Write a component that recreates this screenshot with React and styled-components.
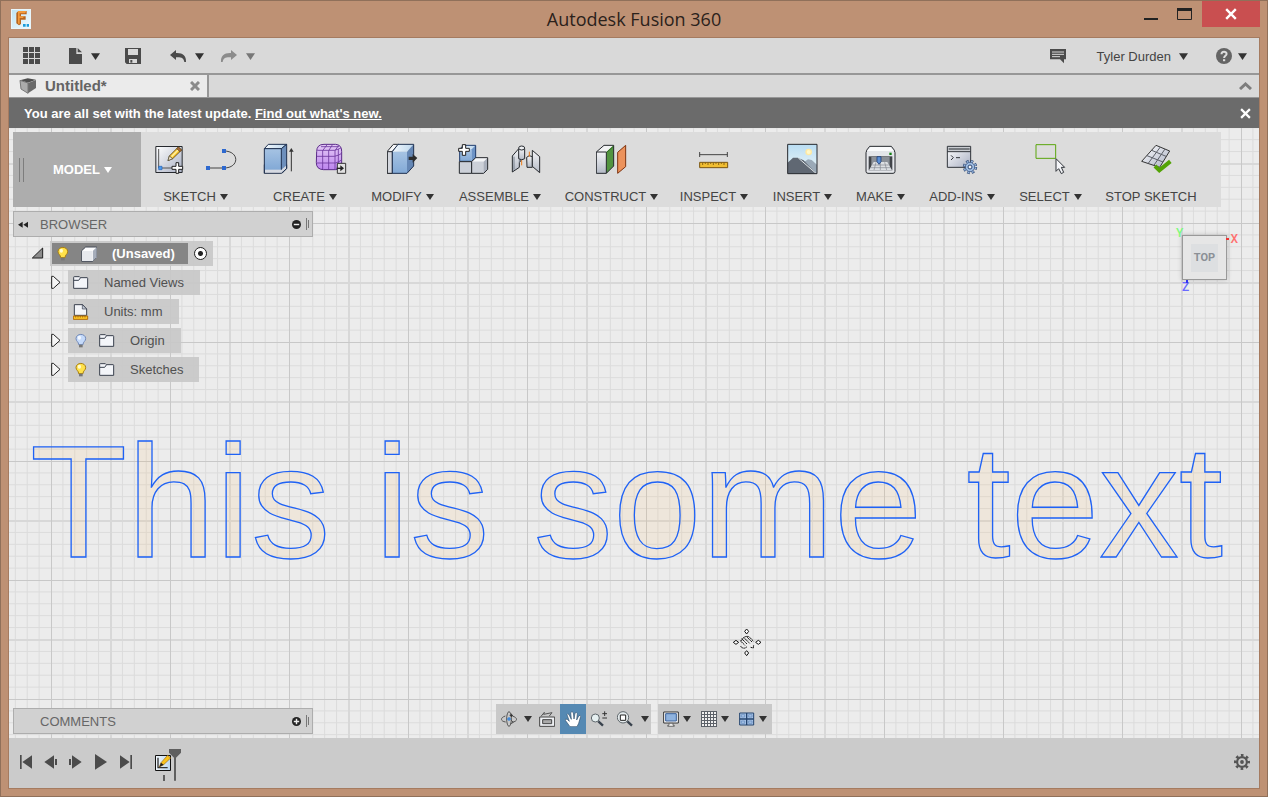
import React from "react";
import styled, { createGlobalStyle } from "styled-components";

const GlobalStyle = createGlobalStyle`
  * { box-sizing: border-box; }
  body { margin: 0; font-family: "Liberation Sans", Arial, sans-serif; font-size: 13px; color: #444; }
  button { font: inherit; color: inherit; background: none; border: 0; padding: 0; margin: 0; }
`;

/* ---------- window frame ---------- */

const Window = styled.div`
  display: flex;
  flex-direction: column;
  height: 100vh;
  min-height: 600px;
  padding: 0 7px 7px;
  border: 1px solid #90705a;
  background: #be9174;
`;

const TitleBar = styled.header`
  display: grid;
  grid-template-columns: 1fr auto 1fr;
  height: 36px;
  flex: none;
`;

const Title = styled.h1`
  margin: 0;
  font: 400 18px/36px "Open Sans", "Noto Sans", sans-serif;
  color: #2b211b;
`;

const LogoSlot = styled.div`
  padding: 8px 0 0 3px;
`;

const WindowButtons = styled.div`
  display: flex;
  justify-content: flex-end;
  align-items: flex-start;
`;

const WindowButton = styled.button`
  display: flex;
  justify-content: center;
  width: ${(p) => (p.$close ? 58 : 34)}px;
  height: 26px;
  padding-top: 7px;
  background: ${(p) => (p.$close ? "#c94f50" : "transparent")};
`;

const Client = styled.div`
  display: flex;
  flex-direction: column;
  flex: 1;
  min-height: 0;
  border: 1px solid #a57b60;
`;

/* ---------- quick access bar, tabs, notice ---------- */

const QuickBar = styled.div`
  display: flex;
  align-items: center;
  flex: none;
  height: 37px;
  padding: 1px 12px 0 14px;
  border-bottom: 2px solid #979797;
  background: #d9d9d9;
`;

const IconButton = styled.button`
  display: flex;
  align-items: center;
  gap: ${(p) => p.$gap || 0}px;
  margin-right: ${(p) => p.$after || 0}px;
`;

const Spacer = styled.div`
  flex: 1;
`;

const TabStrip = styled.div`
  display: flex;
  justify-content: space-between;
  flex: none;
  height: 23px;
  padding-right: 7px;
  border-bottom: 1px solid #979797;
  background: #d9d9d9;
`;

const Tab = styled.div`
  display: flex;
  align-items: center;
  gap: 8px;
  width: 200px;
  padding: 0 7px 0 10px;
  border-right: 2px solid #979797;
  background: #ebebeb;
  color: #646464;
  font-size: 15px;
  font-weight: bold;
  line-height: 22px;
`;

const Notice = styled.div`
  display: flex;
  align-items: center;
  justify-content: space-between;
  flex: none;
  height: 30px;
  padding: 0 8px 0 15px;
  background: #6b6b6b;
  color: #fff;
  font-weight: bold;
  a { color: inherit; }
`;

/* ---------- work area ---------- */

const Workspace = styled.main`
  position: relative;
  display: flex;
  flex-direction: column;
  flex: 1;
  min-height: 0;
  gap: 4px;
  padding: 4px;
  background: #ececec;
`;

const Layer = styled.svg`
  position: absolute;
  inset: 0;
  width: 100%;
  height: 100%;
`;

const Ribbon = styled.div`
  position: relative;
  display: flex;
  align-self: flex-start;
  height: 75px;
  background: #dcdcdc;
`;

const ModelButton = styled.button`
  display: flex;
  align-items: center;
  width: 128px;
  padding-left: 6px;
  background: #adadad;
  color: #fff;
  font-weight: bold;
  span { margin: 0 4px 0 29px; }
`;

const Group = styled.div`
  display: flex;
  flex-direction: column;
  align-items: center;
  position: relative;
  width: ${(p) => p.$width}px;
  padding-top: 11px;
  & + &::before {
    content: "";
    position: absolute;
    left: -1px;
    top: 4px;
    bottom: 4px;
    width: 2px;
    background: #c9c9c9;
  }
`;

const GroupIcons = styled.div`
  display: flex;
  gap: 20px;
  height: 32px;
`;

const GroupLabel = styled.button`
  display: flex;
  align-items: center;
  gap: 4px;
  margin-top: 14px;
  line-height: 16px;
  white-space: nowrap;
`;

const PanelBar = styled.div`
  position: relative;
  display: flex;
  align-items: center;
  width: 300px;
  height: 26px;
  padding: 0 2px 0 4px;
  border: 1px solid #adadad;
  background: #d1d1d1;
  color: #666;
`;

const PanelToggle = styled.span`
  display: flex;
  width: 22px;
`;

const Tree = styled.ul`
  position: relative;
  display: flex;
  flex-direction: column;
  gap: 4px;
  margin: 0;
  padding: 0 0 0 18px;
  list-style: none;
`;

const TreeItem = styled.li`
  display: flex;
  align-items: center;
  height: 25px;
  padding-left: ${(p) => (p.$child ? 20 : 0)}px;
`;

const Expander = styled.button`
  display: flex;
  width: ${(p) => (p.$child ? 17 : 19)}px;
  height: 15px;
`;

const Pill = styled.div`
  display: flex;
  align-items: center;
  height: 25px;
  padding: 0 16px 0 5px;
  background: rgba(200, 200, 200, 0.92);
  color: #505050;
  svg + svg { margin-left: 10px; }
  span { margin-left: 15px; }
`;

const RootPill = styled(Pill)`
  padding: 0 6px 0 2px;
`;

const RootName = styled.div`
  display: flex;
  align-items: center;
  width: 136px;
  height: 21px;
  margin-right: 6px;
  padding-left: 3px;
  background: #858585;
  color: #fff;
  font-weight: bold;
`;

const ActiveRadio = styled.input`
  appearance: none;
  width: 13px;
  height: 13px;
  margin: 0;
  border: 1px solid #222;
  border-radius: 50%;
  background: radial-gradient(circle, #222 2px, #fff 3px);
`;

const ViewCube = styled.div`
  position: absolute;
  top: 107px;
  right: 32px;
  display: grid;
  place-items: center;
  width: 45px;
  height: 45px;
  border: 1px solid #999;
  background: #e6e6e6;
  box-shadow: 0 0 5px rgba(0, 0, 0, 0.2);
`;

const CubeFace = styled.button`
  width: 27px;
  height: 28px;
  background: #dddfe1;
  color: #8b9096;
  font: 700 11px Roboto, sans-serif;
`;

const Axis = styled.span`
  position: absolute;
  color: ${(p) => p.$color};
  font: 500 12px/12px Roboto, sans-serif;
`;

const AxisX = styled(Axis)`
  top: -3px;
  right: -12px;
  &::before {
    content: "";
    position: absolute;
    left: -4px;
    top: 5px;
    width: 3px;
    height: 2px;
    background: #e33;
  }
`;

const AxisY = styled(Axis)`
  top: -9px;
  left: -7px;
`;

const AxisZ = styled(Axis)`
  bottom: -14px;
  left: -1px;
  &::before {
    content: "";
    position: absolute;
    left: 4px;
    top: -1px;
    width: 2px;
    height: 3px;
    background: #33e;
  }
`;

const Footer = styled.div`
  position: relative;
  display: grid;
  grid-template-columns: 1fr auto 1fr;
  align-items: end;
  margin-top: auto;
`;

const NavBars = styled.div`
  display: flex;
  gap: 7px;
`;

const NavBar = styled.div`
  display: flex;
  height: 30px;
  background: #c9c9c9;
`;

const NavButton = styled.button`
  display: flex;
  align-items: center;
  justify-content: center;
  width: 26px;
  background: ${(p) => (p.$active ? "#5589b3" : "transparent")};
`;

const NavArrow = styled.button`
  display: flex;
  align-items: center;
  justify-content: center;
  width: ${(p) => (p.$end ? 13 : 12)}px;
`;

const SplitButton = styled.button`
  display: flex;
  align-items: center;
  gap: 4px;
  width: 38px;
  padding-left: 5px;
`;

const Timeline = styled.footer`
  display: flex;
  align-items: center;
  flex: none;
  height: 50px;
  padding: 0 9px 2px 10px;
  background: #cbcbcb;
`;

const Playback = styled.div`
  display: flex;
  gap: 11px;
  margin-right: 21px;
`;

const FeatureButton = styled.button`
  display: flex;
  padding-top: 6px;
`;

/* ---------- icons ---------- */

const Icon = ({ box, w = 32, h = 32, children }) => (
  <IconSvg viewBox={box} width={w} height={h} fill="none" aria-hidden="true">
    {children}
  </IconSvg>
);

const IconSvg = styled.svg`
  flex: none;
`;

const Arrow = ({ color = "#333", w = 8, h = 6 }) => (
  <Icon box="0 0 8 6" w={w} h={h}>
    <path d="M0 0H8L4 6Z" fill={color} />
  </Icon>
);

const Grip = () => (
  <Icon box="0 0 5 24" w={5} h={24}>
    <path d="M.5 0V24M4.500 0V24" stroke="#7d7d7d" />
  </Icon>
);

const SmallGrip = () => (
  <Icon box="0 0 4 12" w={4} h={12}>
    <path d="M.5 0V12M2.500 2V10" stroke="#777" />
  </Icon>
);

const Cross = ({ color, size = 10, width = 2 }) => (
  <Icon box="0 0 10 10" w={size} h={size}>
    <path d="M1 1 9 9M9 1 1 9" stroke={color} strokeWidth={width} />
  </Icon>
);

const Logo = () => (
  <Icon box="33 27 60 60" w={20} h={20}>
    <defs>
      <linearGradient id="sky" x1="0" y1="0" x2="1" y2="1">
        <stop stopColor="#bfe4f2" /><stop offset="1" stopColor="#f2fafd" />
      </linearGradient>
    </defs>
    <path d="M33 27H93V87H33Z" fill="#e8f6fb" />
    <path d="M36 30H90V84H36Z" fill="url(#sky)" />
    <path d="M49 39 55 33H80V43H63V49H77V59H63V72L57 76 49 70Z" fill="#b8651c" />
    <path d="M54 33H80L75 40H59V49H72L69 54H59V71H54Z" fill="#f39a3b" />
    <path d="M69 72H77V80H69ZM80 72H87V80H80Z" fill="#1b9ddb" />
  </Icon>
);

const AppsIcon = () => (
  <Icon box="69 144 54 54" w={18} h={18}>
    {[69, 87, 105].map((x) => [144, 162, 180].map((y) => (
      <rect key={x + "-" + y} x={x} y={y} width="15" height="15" fill="#4b4b4b" />
    )))}
  </Icon>
);

const FileIcon = () => (
  <Icon box="204 144 48 48" w={16} h={16}>
    <path d="M207 144H229V162H246V192H207ZM233 144 246 157H233Z" fill="#4b4b4b" />
  </Icon>
);

const SaveIcon = () => (
  <Icon box="375 144 48 48" w={16} h={16}>
    <path fillRule="evenodd" d="M375 144H423V192H380L375 187ZM384 147V165H414V147ZM387 177V189H411V177Z" fill="#4b4b4b" />
    <path d="M391 180H397V188H391Z" fill="#4b4b4b" />
  </Icon>
);

const UndoIcon = ({ color = "#4b4b4b", flip }) => (
  <Icon box="507 144 54 48" w={18} h={16}>
    <path transform={flip ? "translate(1068 0) scale(-1 1)" : undefined}
      d="M510 165 528 150V159C548 158 559 166 558 186H553C551 175 545 171 528 172V180Z" fill={color} />
  </Icon>
);

const CommentIcon = () => (
  <Icon box="90 147 48 45" w={16} h={15}>
    <path d="M90 147H138V178H132V190L120 178H90Z" fill="#4b4b4b" />
    <path d="M96 156H132M96 163H132M96 170H120" stroke="#d9d9d9" strokeWidth="3" />
  </Icon>
);

const HelpIcon = () => (
  <Icon box="0 0 16 16" w={16} h={16}>
    <circle cx="8" cy="8" r="8" fill="#646464" />
    <path d="M5.500 6.300C5.500 3 10.700 3.200 10.600 6C10.500 7.800 8.100 8 8.100 10" stroke="#ddd" strokeWidth="2" />
    <path d="M7 11.200H9.200V13.200H7Z" fill="#ddd" />
  </Icon>
);

const TabCube = () => (
  <Icon box="54 231 54 51" w={18} h={17}>
    <path d="M57 238 80 232 105 236 81 245Z" fill="#4e4e4e" />
    <path d="M57 238 81 246V277L60 264Z" fill="#ababab" />
    <path d="M81 246 105 237V261L81 277Z" fill="#6a6a6a" />
    <path d="M57 238 81 246V277L60 264Z" stroke="#777" strokeWidth="3" />
  </Icon>
);

const DefsHolder = styled.svg`
  position: absolute;
`;

const Gradients = () => (
  <DefsHolder width="0" height="0" aria-hidden="true">
    <defs>
      <linearGradient id="steel" x1="0" y1="0" x2="1" y2="1">
        <stop stopColor="#fff" /><stop offset="1" stopColor="#a9b0c3" />
      </linearGradient>
      <linearGradient id="pale" x1="0" y1="0" x2="0" y2="1">
        <stop stopColor="#f4f5f7" /><stop offset="1" stopColor="#b4bac6" />
      </linearGradient>
      <linearGradient id="blue" x1="0" y1="0" x2="0" y2="1">
        <stop stopColor="#a6c3e3" /><stop offset="1" stopColor="#82a9d6" />
      </linearGradient>
      <linearGradient id="blueTop" x1="0" y1="0" x2="1" y2="0">
        <stop stopColor="#f3f8fc" /><stop offset="1" stopColor="#bcd7ee" />
      </linearGradient>
      <linearGradient id="violet" x1="0" y1="0" x2="0" y2="1">
        <stop stopColor="#e4caf6" /><stop offset="1" stopColor="#bd85ee" />
      </linearGradient>
      <linearGradient id="skyline" x1="0" y1="0" x2="0" y2="1">
        <stop stopColor="#b9ddf3" /><stop offset="1" stopColor="#f0f8f8" />
      </linearGradient>
    </defs>
  </DefsHolder>
);

const SketchIcon = () => (
  <Icon box="41 39 96 96">
    <path d="M46.500 49.500H125.500V127.500H46.500Z" fill="url(#steel)" stroke="#26292e" strokeWidth="3" />
    <path d="M55 57V114H102" stroke="#555" strokeWidth="3" />
    <path d="M55 109H65V119H55Z" fill="#4c9bf0" stroke="#1f5fb5" strokeWidth="2" />
    <path d="M83 92 87 78 114 51 124 60 97 86Z" fill="#f7c52e" stroke="#55401a" strokeWidth="2.500" />
    <path d="M92 78 114 56 117 59 95 82Z" fill="#fff0a0" />
    <path d="M114 51 124 60 119 65 109 56Z" fill="#a9693c" stroke="#55401a" strokeWidth="2" />
    <path d="M83 92 87 78 97 86Z" fill="#f6e6cf" stroke="#443" strokeWidth="2" />
    <path d="M107 98H115V109H127V118H115V130H107V118H95V109H107Z" fill="#fff" stroke="#222" strokeWidth="3" />
  </Icon>
);

const ArcIcon = () => (
  <Icon box="198 39 96 96">
    <path d="M204 114H252C299 114 299 63 252 63" stroke="#454545" strokeWidth="3" />
    <path d="M198 108H210V120H198ZM246 108H258V120H246ZM246 57H258V69H246Z" fill="#2e69cf" />
  </Icon>
);

const ExtrudeIcon = () => (
  <Icon box="369 39 96 96">
    <path d="M373 116V130H424L440 116V104H373Z" fill="#d6dae2" stroke="#26344e" strokeWidth="3" />
    <path d="M373 56 385 43H440L424 56Z" fill="url(#blueTop)" stroke="#1f3150" strokeWidth="3" />
    <path d="M373 56H424V119H373Z" fill="url(#blue)" />
    <path d="M424 56 440 43V106L424 119Z" fill="#6d8fbc" />
    <path d="M373 130V56H424L440 43V115L426 130M424 56V119" stroke="#1f3150" strokeWidth="3" />
    <path d="M454 124V60" stroke="#333" strokeWidth="3" />
    <path d="M447 65 454 54 461 65Z" fill="#333" />
  </Icon>
);

const FormIcon = () => (
  <Icon box="525 39 96 96">
    <path d="M530 65Q530 43 552 43H587Q606 45 605 65V100Q604 118 586 119H550Q529 118 529 98Z" fill="url(#violet)" stroke="#5a2b87" strokeWidth="3" />
    <path d="M530 79H583Q598 76 605 70M530 99H586Q598 96 604 90M532 61H584Q596 57 603 54M543 50H597M548 118V62L562 43M566 119V62L578 43M585 119V62L596 46M595 112V57" stroke="#6c379d" strokeWidth="2.500" />
    <path d="M592 100H617V130H592Z" fill="#e1e1e1" stroke="#333" strokeWidth="3" />
    <path d="M590 115H607" stroke="#222" strokeWidth="4" />
    <path d="M601 106 612 115 601 124Z" fill="#222" />
  </Icon>
);

const ModifyIcon = () => (
  <Icon box="741 39 96 96">
    <path d="M742 64 760 43H776L757 64V130H742Z" fill="#f6f7f9" stroke="#26292e" strokeWidth="3" />
    <path d="M742 65H757V130H742Z" fill="#d4d7de" stroke="#26292e" strokeWidth="3" />
    <path d="M757 65 774 43H821L801 65Z" fill="url(#blueTop)" />
    <path d="M757 65H801V130H757Z" fill="url(#blue)" />
    <path d="M801 65 821 43V108L801 130Z" fill="#6587b5" />
    <path d="M757 65 774 43H821V108L801 130H757Z" stroke="#1f3150" strokeWidth="3" />
    <path d="M806 80H818V72L832 84 818 98V90H806Z" fill="#2c2c2c" />
  </Icon>
);

const AssembleIcon = () => (
  <Icon box="54 39 96 96">
    <path d="M59 94V58L70 46H107V84L95 94Z" fill="url(#blueTop)" />
    <path d="M59 58H95V94H59Z" fill="url(#blue)" />
    <path d="M95 58 107 46V84L95 94Z" fill="#6d93c5" />
    <path d="M59 94V58L70 46H107V84L95 94Z" stroke="#1f3b6b" strokeWidth="3" />
    <path d="M58 95H95V130H58Z" fill="#ccd0d8" stroke="#26292e" strokeWidth="3" />
    <path d="M95 95 107 83H143L131 95Z" fill="#f4f5f7" />
    <path d="M95 95H131V130H95Z" fill="#ccd0d8" />
    <path d="M131 95 143 83V118L131 130Z" fill="#aab0bc" />
    <path d="M95 95 107 83H143V118L131 130H95Z" stroke="#26292e" strokeWidth="3" />
    <path d="M67 44H77V55H88V64H77V76H67V64H56V55H67Z" fill="#fff" stroke="#222" strokeWidth="3" />
  </Icon>
);

const JointIcon = () => (
  <Icon box="210 39 96 96">
    <path d="M217 78 237 55 251 57V80L238 98V112L217 126Z" fill="url(#pale)" stroke="#26292e" strokeWidth="3" />
    <path d="M238 56V98M222 80V119" stroke="#66707c" strokeWidth="2.500" />
    <path d="M236 56V86Q245 93 254 86V56" fill="url(#pale)" stroke="#26292e" strokeWidth="3" />
    <ellipse cx="245" cy="54" rx="9" ry="6" fill="#eef0f3" stroke="#26292e" strokeWidth="3" />
    <path d="M260 82Q267 73 277 80V112H261Z" fill="url(#pale)" stroke="#26292e" strokeWidth="3" />
    <path d="M277 61 299 80V128L277 109Z" fill="url(#pale)" stroke="#26292e" strokeWidth="3" />
    <path d="M245 91V106M268 65V80" stroke="#ef7d1b" strokeWidth="3" />
  </Icon>
);

const ConstructIcon = () => (
  <Icon box="468 39 96 96">
    <path d="M469 66 492 46H521L499 66Z" fill="#f2f3f4" />
    <path d="M469 66H499V130H469Z" fill="url(#pale)" />
    <path d="M499 66 521 46V108L499 130Z" fill="#529440" />
    <path d="M469 66 492 46H521V108L499 130H469ZM469 66H499V130" stroke="#26292e" strokeWidth="3" />
    <path d="M500 67 520 49" stroke="#2c6a20" strokeWidth="3" />
    <path d="M533 67 557 46V110L533 130Z" fill="#ec925b" stroke="#7e3310" strokeWidth="3" />
  </Icon>
);

const InspectIcon = () => (
  <Icon box="774 39 96 96">
    <path d="M779 66V81M862 66V81M779 74H862" stroke="#444" strokeWidth="3" />
    <path d="M779 97H863V113H779Z" fill="#f1be31" stroke="#7a5510" strokeWidth="3" />
    <path d="M788 98V105M796 98V102M804 98V105M812 98V102M820 98V105M828 98V102M836 98V105M844 98V102M852 98V105" stroke="#7a5510" strokeWidth="2.500" />
  </Icon>
);

const InsertIcon = () => (
  <Icon box="80 39 96 96">
    <path d="M82 43H170V131H82Z" fill="url(#skyline)" />
    <circle cx="145" cy="66" r="10" fill="#ffe9a3" />
    <circle cx="145" cy="66" r="6" fill="#fff8c9" />
    <path d="M118 105 143 88 154 90 170 104V131H118Z" fill="#9aa9b7" />
    <path d="M82 98 98 83H112L130 91 168 131H82Z" fill="#606873" />
    <path d="M114 84 168 131" stroke="#dde3e6" strokeWidth="3" />
    <path d="M82 43H170V131H82Z" stroke="#26292e" strokeWidth="3" />
  </Icon>
);

const MakeIcon = () => (
  <Icon box="314 39 96 96">
    <path d="M317 68Q317 61 328 49H393Q404 61 404 68V124Q404 130 398 130H323Q317 130 317 124Z" fill="#e4e6ea" stroke="#26292e" strokeWidth="3" />
    <path d="M320 63 331 51H390L401 63Z" fill="#fafbfc" />
    <path d="M387 68H394V75H387Z" fill="#138013" />
    <path d="M325 79H396V121H325Z" fill="#414449" />
    <path d="M333 81H388V115H333Z" fill="#8b9098" />
    <path d="M326 121 340 96H381L395 121Z" fill="#dcdfe3" />
    <path d="M336 105H385M331 113H390M347 97 341 120M360 97V120M373 97 379 120" stroke="#83878f" strokeWidth="2" />
    <path d="M350 80H362V95L356 103 350 95Z" fill="#5b8fd6" stroke="#1e3f78" strokeWidth="2.500" />
  </Icon>
);

const AddInsIcon = () => (
  <Icon box="558 39 96 96">
    <path d="M562 49H632V112H562Z" fill="url(#steel)" />
    <path d="M562 49H632V64H562Z" fill="#c9ccd1" />
    <path d="M566 54H629V60H566Z" fill="#777b80" />
    <path d="M562 49H632V112H562ZM562 65H632" stroke="#30343a" strokeWidth="3" />
    <path d="M573 76 580 83 573 90M588 83H600" stroke="#30343a" strokeWidth="3" />
    <circle cx="630" cy="111" r="17" stroke="#2c4672" strokeWidth="9" strokeDasharray="7.500 5.850" />
    <circle cx="630" cy="111" r="16" stroke="#96b5dc" strokeWidth="7" strokeDasharray="5 7.570" strokeDashoffset="-1" />
    <circle cx="630" cy="111" r="14" fill="#9fbde2" stroke="#2c4672" strokeWidth="2" />
    <circle cx="630" cy="111" r="6" fill="#f4f4f4" stroke="#2c4672" strokeWidth="3" />
  </Icon>
);

const SelectIcon = () => (
  <Icon box="104 39 96 96">
    <path d="M107 44H166V85H107Z" stroke="#5aa50d" strokeWidth="3" />
    <path d="M167 86V124L175 116 183 131 190 127 183 112H193Z" fill="#f4f5f8" stroke="#30343a" strokeWidth="3" />
  </Icon>
);

const StopSketchIcon = () => (
  <Icon box="423 39 96 96">
    <path d="M468 46 509 63 479 112 425 94Z" fill="url(#steel)" stroke="#333" strokeWidth="3" />
    <path d="M481 51 444 101M495 57 461 107M455 61 498 79M441 77 489 96" stroke="#5c6068" strokeWidth="3" />
    <path d="M465 108 478 121 511 94" stroke="#53a306" strokeWidth="12" />
  </Icon>
);

const Bulb = ({ on }) => (
  <Icon box="165 120 48 48" w={16} h={16}>
    <path d="M174 137C174 120 203 120 203 137C203 145 195 146 195 155H182C182 146 174 145 174 137Z"
      fill={on ? "#ffe14a" : "#c5dafa"} stroke={on ? "#a97f10" : "#7189b8"} strokeWidth="3" />
    <ellipse cx="184" cy="134" rx="5" ry="6" fill={on ? "#fffbd0" : "#f3f8ff"} />
    <path d="M183 155H194V163H183Z" fill="#777" />
  </Icon>
);

const BodyIcon = () => (
  <Icon box="243 120 48 48" w={16} h={16}>
    <path d="M245 134 257 123H290V154L278 166H245Z" fill="#fcfcfd" stroke="#454b57" strokeWidth="3" strokeLinejoin="round" />
    <path d="M279 134 290 124V154L279 165Z" fill="#a6adba" />
    <path d="M246 135H278V165H246Z" fill="#e7e9ed" />
  </Icon>
);

const FolderIcon = () => (
  <Icon box="219 210 48 48" w={16} h={16}>
    <path d="M221 250V217Q221 215 223 215H238L241 218H261Q263 218 263 220V250Z" fill="#f3f5f9" stroke="#39404e" strokeWidth="3" />
    <path d="M221 226H236L241 219" stroke="#39404e" strokeWidth="3" />
  </Icon>
);

const UnitsIcon = () => (
  <Icon box="216 294 48 48" w={16} h={16}>
    <path d="M220 328V296H245L257 309V328Z" fill="#f3f5f9" stroke="#39404e" strokeWidth="3" />
    <path d="M244 296V309H257Z" fill="#c4cad6" stroke="#39404e" strokeWidth="2" />
    <path d="M217 330H260V340H217Z" fill="#ffc928" stroke="#b36b09" strokeWidth="3" />
    <path d="M224 330V335M231 330V335M238 330V335M245 330V335M252 330V335" stroke="#8d5408" strokeWidth="2" />
  </Icon>
);

const OpenTriangle = () => (
  <Icon box="93 123 39 39" w={13} h={13}>
    <path d="M97 159 128 129V159Z" fill="#8c8c8c" stroke="#222" strokeWidth="3" />
  </Icon>
);

const ClosedTriangle = () => (
  <Icon box="153 210 30 45" w={10} h={15}>
    <path d="M155 214V250H160L180 232 160 214Z" fill="#f6f6f6" stroke="#222" strokeWidth="3" />
  </Icon>
);

const DoubleLeft = () => (
  <Icon box="54 45 36 21" w={12} h={7}>
    <path d="M54 56 68 47V65ZM70 56 84 47V65Z" fill="#222" />
  </Icon>
);

const RoundSign = ({ plus }) => (
  <Icon box="0 0 10 10" w={9} h={9}>
    <circle cx="5" cy="5" r="5" fill="#222" />
    <path d={plus ? "M2 5H8M5 2V8" : "M2 5H8"} stroke="#eee" strokeWidth="1.600" />
  </Icon>
);

const OrbitIcon = () => (
  <Icon box="47 272 48 48" w={16} h={16}>
    <ellipse cx="71" cy="296" rx="7" ry="22" stroke="#555" strokeWidth="3" />
    <path d="M60 287C44 292 45 303 61 305M81 287C98 292 98 303 80 306M75 311 84 306 77 299" stroke="#555" strokeWidth="3" />
    <path d="M71 290V302M65 296H77" stroke="#1a76dd" strokeWidth="3" />
    <path d="M78 280V290M73 285H83" stroke="#333" strokeWidth="3" />
  </Icon>
);

const LookAtIcon = () => (
  <Icon box="161 272 48 48" w={16} h={16}>
    <path d="M163 290H208V318H163Z" fill="#eef0f3" stroke="#444" strokeWidth="3" />
    <path d="M172 298H199V310H172Z" fill="#aaa" stroke="#444" strokeWidth="3" />
    <path d="M167 288 177 276 175 282 200 277 192 287" stroke="#555" strokeWidth="3" />
  </Icon>
);

const HandIcon = () => (
  <Icon box="240 272 48 48" w={16} h={16}>
    <path d="M255 319 241 300Q240 293 248 298L253 303 246 283Q248 278 252 283L259 297 257 277Q261 271 265 277L267 296 270 278Q275 274 277 280L275 299 281 287Q286 283 287 288L281 309 276 319Z" fill="#fff" stroke="#34526e" strokeWidth="2" />
  </Icon>
);

const ZoomIcon = () => (
  <Icon box="318 272 51 48" w={17} h={16}>
    <path d="M340 303 354 316" stroke="#39424d" strokeWidth="7" />
    <circle cx="331" cy="293" r="12" fill="#e6f0f1" stroke="#5e666b" strokeWidth="3" />
    <path d="M352 280H366M359 273V287M352 293H366" stroke="#333" strokeWidth="3" />
  </Icon>
);

const FitIcon = () => (
  <Icon box="396 272 48 48" w={16} h={16}>
    <path d="M427 303 441 316" stroke="#39424d" strokeWidth="7" />
    <circle cx="414" cy="291" r="17" fill="#e6ecee" stroke="#5e666b" strokeWidth="3" />
    <path d="M406 284H422V300H406Z" fill="#fff" stroke="#222" strokeWidth="3" />
  </Icon>
);

const MonitorIcon = () => (
  <Icon box="534 272 48 48" w={16} h={16}>
    <path d="M536 275H580V308H536Z" fill="#fff" stroke="#333" strokeWidth="3" />
    <path d="M542 280H574V302H542Z" fill="#8fb3df" stroke="#3a5f97" strokeWidth="3" />
    <path d="M552 309H564V315H568V318H548V315H552Z" fill="#eee" stroke="#444" strokeWidth="2" />
  </Icon>
);

const GridIcon = () => (
  <Icon box="648 272 48 48" w={16} h={16}>
    <path d="M650 275H695V318H650Z" fill="#f0f0f0" />
    <path d="M648 273.500H696M648 282.500H696M648 291.500H696M648 300.500H696M648 309.500H696M648 318.500H696M649.500 272V320M658.500 272V320M667.500 272V320M676.500 272V320M685.500 272V320M694.500 272V320" stroke="#5c6168" strokeWidth="3" />
  </Icon>
);

const ViewportsIcon = () => (
  <Icon box="762 272 48 48" w={16} h={16}>
    <path d="M764 278H806V314H764Z" fill="#a9c4e6" stroke="#24446f" strokeWidth="3" />
    <path d="M785 278V314M764 296H806" stroke="#24446f" strokeWidth="4" />
    <path d="M769 283H779V290H769ZM791 283H801V290H791ZM769 302H779V309H769ZM791 302H801V309H791Z" stroke="#5e87bd" strokeWidth="2" />
  </Icon>
);

const SettingsIcon = () => (
  <Icon box="0 0 16 16" w={16} h={16}>
    <circle cx="8" cy="8" r="6.700" stroke="#555" strokeWidth="2.600" strokeDasharray="2.600 2.662" strokeDashoffset="1.300" />
    <circle cx="8" cy="8" r="4.900" stroke="#555" strokeWidth="2.200" />
    <circle cx="8" cy="8" r="1.900" fill="#555" />
  </Icon>
);

const FeatureIcon = () => (
  <Icon box="462 174 84 102" w={28} h={34}>
    <path d="M466.500 196.500H511.500V241.500H466.500Z" fill="url(#blueTop)" stroke="#111" strokeWidth="3" />
    <path d="M474 203V233H503" stroke="#333" strokeWidth="4" />
    <path d="M478 231 483 218 503 196 512 204 491 224Z" fill="#f9c21d" stroke="#9c6a12" strokeWidth="2" />
    <path d="M478 231 483 218 491 224Z" fill="#222" />
    <path d="M507 177H543V188L528 203V272H522V203L507 188ZM489 255H495V273H489Z" fill="#5f5f5f" />
  </Icon>
);

/* ---------- data ---------- */

const groups = [
  { label: "SKETCH", width: 109, icons: [SketchIcon, ArcIcon] },
  { label: "CREATE", width: 110, icons: [ExtrudeIcon, FormIcon] },
  { label: "MODIFY", width: 85, icons: [ModifyIcon] },
  { label: "ASSEMBLE", width: 110, icons: [AssembleIcon, JointIcon] },
  { label: "CONSTRUCT", width: 113, icons: [ConstructIcon] },
  { label: "INSPECT", width: 92, icons: [InspectIcon] },
  { label: "INSERT", width: 85, icons: [InsertIcon] },
  { label: "MAKE", width: 71, icons: [MakeIcon] },
  { label: "ADD-INS", width: 92, icons: [AddInsIcon] },
  { label: "SELECT", width: 85, icons: [SelectIcon] },
  { label: "STOP SKETCH", width: 128, icons: [StopSketchIcon], noMenu: true },
];

const treeItems = [
  { label: "Named Views", icons: [<FolderIcon key="f" />], expands: true },
  { label: "Units: mm", icons: [<UnitsIcon key="u" />] },
  { label: "Origin", icons: [<Bulb key="b" />, <FolderIcon key="f" />], expands: true },
  { label: "Sketches", icons: [<Bulb key="b" on />, <FolderIcon key="f" />], expands: true },
];

const playback = [
  { name: "Go to start", box: "57 192 42 48", d: "M60 195H65V237H60ZM96 196V236L67 216Z" },
  { name: "Step back", box: "132 192 42 48", d: "M162 196V236L133 216ZM165 207H171V225H165Z" },
  { name: "Step forward", box: "207 192 42 48", d: "M216 196V236L245 216ZM207 207H213V225H207Z" },
  { name: "Play", box: "282 192 42 48", d: "M285 192V239L321 216Z" },
  { name: "Go to end", box: "357 192 42 48", d: "M360 196V236L389 216ZM391 195H396V237H391Z" },
];

const minorSteps = [1, 2, 3, 4, 6, 7, 8, 9].map((n) => n * 11.9);

/* ---------- drawings on the canvas ---------- */

const GridLayer = () => (
  <Layer aria-hidden="true">
    <defs>
      <pattern id="grid" x="42" y="95" width="119" height="119" patternUnits="userSpaceOnUse">
        {minorSteps.map((s) => (
          <path key={s} d={`M${s} 0V119M0 ${s}H119`} stroke="#dbdbdb" strokeWidth="1" />
        ))}
        <path d="M60 0V119M0 60H119" stroke="#d8d8d8" strokeWidth="2" />
        <path d="M.5 0V119M0 .5H119" stroke="#c8c8c8" strokeWidth="1" />
      </pattern>
    </defs>
    <rect width="100%" height="100%" fill="url(#grid)" />
  </Layer>
);

const eBowl = "M1006 233H1143C1141 187 1115 161 1076 161C1037 161 1008 187 1006 233Z";

const SketchText = styled.text`
  font: 159px "Liberation Sans", Arial, sans-serif;
  fill: rgba(255, 190, 100, 0.12);
  stroke: #1f62f5;
  stroke-width: 1.3px;
`;

const SketchLayer = () => (
  <Layer viewBox="0 0 1250 610">
    <g transform="translate(511 302) scale(.3333)" fill="rgba(255,190,100,.12)">
      <path d="M411 161C454 161 484 191 484 257C484 322 454 352 411 352C368 352 338 322 338 257C338 191 368 161 411 161Z" />
      <path d={eBowl} />
      <path d={eBowl} transform="translate(530 0)" />
    </g>
    <SketchText x="21" y="429">This is some text</SketchText>
    <g transform="translate(476 492) scale(.3333)" fill="#fff" stroke="#111" strokeWidth="3">
      <path d="M785 27 791 34 785 42 779 34ZM785 92 791 99 785 107 779 99ZM745 67 753 61 761 67 753 73ZM812 67 820 61 828 67 820 73Z" />
      <path fill="none" strokeDasharray="5 1" d="M766 62 780 76M770 56 786 72M776 52 794 70M785 50 801 66M768 64Q776 46 792 50L806 64M766 78Q776 90 786 80M797 82 805 84 806 76" />
    </g>
  </Layer>
);

/* ---------- page ---------- */

export default function App() {
  return (
    <Window>
      <GlobalStyle />
      <Gradients />
      <TitleBar>
        <LogoSlot><Logo /></LogoSlot>
        <Title>Autodesk Fusion 360</Title>
        <WindowButtons>
          <WindowButton aria-label="Minimize">
            <Icon box="0 0 14 14" w={14} h={14}><path d="M0 11H14" stroke="#222" strokeWidth="2" /></Icon>
          </WindowButton>
          <WindowButton aria-label="Maximize">
            <Icon box="0 0 16 12" w={16} h={12}>
              <path d="M.5 .5H14.500V11.500H.5Z" stroke="#222" /><path d="M0 0H15V3H0Z" fill="#222" />
            </Icon>
          </WindowButton>
          <WindowButton $close aria-label="Close"><Cross color="#fff" size={12} width={2} /></WindowButton>
        </WindowButtons>
      </TitleBar>

      <Client>
        <QuickBar>
          <IconButton $after={27} aria-label="Data panel"><AppsIcon /></IconButton>
          <IconButton $gap={7} $after={25} aria-label="File"><FileIcon /><Arrow w={9} h={7} /></IconButton>
          <IconButton $after={28} aria-label="Save"><SaveIcon /></IconButton>
          <IconButton $gap={8} $after={16} aria-label="Undo"><UndoIcon /><Arrow w={9} h={7} /></IconButton>
          <IconButton $gap={8} aria-label="Redo"><UndoIcon flip color="#8c8c8c" /><Arrow w={9} h={7} color="#777" /></IconButton>
          <Spacer />
          <IconButton $after={31} aria-label="Comments"><CommentIcon /></IconButton>
          <IconButton $gap={8} $after={28}>Tyler Durden<Arrow w={9} h={7} /></IconButton>
          <IconButton $gap={6} aria-label="Help"><HelpIcon /><Arrow w={9} h={7} /></IconButton>
        </QuickBar>

        <TabStrip>
          <Tab>
            <TabCube />
            Untitled*
            <Spacer />
            <IconButton aria-label="Close tab"><Cross color="#8b8b8b" size={10} width={3} /></IconButton>
          </Tab>
          <IconButton aria-label="Collapse">
            <Icon box="0 0 13 8" w={13} h={8}><path d="M1 7 6.500 2 12 7" stroke="#7d7d7d" strokeWidth="3" /></Icon>
          </IconButton>
        </TabStrip>

        <Notice>
          <div>You are all set with the latest update. <a href="#new">Find out what's new.</a></div>
          <IconButton aria-label="Dismiss"><Cross color="#fff" size={11} width={2} /></IconButton>
        </Notice>

        <Workspace>
          <GridLayer />
          <SketchLayer />

          <Ribbon>
            <ModelButton><Grip /><span>MODEL</span><Arrow color="#fff" /></ModelButton>
            {groups.map(({ label, width, icons, noMenu }) => (
              <Group key={label} $width={width}>
                <GroupIcons>{icons.map((Item, i) => <Item key={i} />)}</GroupIcons>
                <GroupLabel>{label}<Arrow color={noMenu ? "transparent" : "#333"} /></GroupLabel>
              </Group>
            ))}
          </Ribbon>

          <PanelBar>
            <PanelToggle><DoubleLeft /></PanelToggle>
            BROWSER
            <Spacer />
            <IconButton $after={5} aria-label="Hide browser"><RoundSign /></IconButton>
            <SmallGrip />
          </PanelBar>

          <Tree>
            <TreeItem>
              <Expander aria-label="Collapse document"><OpenTriangle /></Expander>
              <RootPill>
                <RootName><Bulb on /><BodyIcon /><span>(Unsaved)</span></RootName>
                <ActiveRadio type="radio" name="active" defaultChecked aria-label="Activate (Unsaved)" />
              </RootPill>
            </TreeItem>
            {treeItems.map(({ label, icons, expands }) => (
              <TreeItem key={label} $child>
                {expands
                  ? <Expander $child aria-label={"Expand " + label}><ClosedTriangle /></Expander>
                  : <Expander as="div" $child />}
                <Pill>{icons}<span>{label}</span></Pill>
              </TreeItem>
            ))}
          </Tree>

          <ViewCube>
            <CubeFace>TOP</CubeFace>
            <AxisX $color="#ff7070">X</AxisX>
            <AxisY $color="#7dfa7d">Y</AxisY>
            <AxisZ $color="#6a6aff">Z</AxisZ>
          </ViewCube>

          <Footer>
            <PanelBar>
              <PanelToggle />
              COMMENTS
              <Spacer />
              <IconButton $after={5} aria-label="Show comments"><RoundSign plus /></IconButton>
              <SmallGrip />
            </PanelBar>
            <NavBars>
              <NavBar>
                <NavButton aria-label="Orbit"><OrbitIcon /></NavButton>
                <NavArrow aria-label="Orbit options"><Arrow /></NavArrow>
                <NavButton aria-label="Look at"><LookAtIcon /></NavButton>
                <NavButton $active aria-label="Pan"><HandIcon /></NavButton>
                <NavButton aria-label="Zoom"><ZoomIcon /></NavButton>
                <NavButton aria-label="Fit"><FitIcon /></NavButton>
                <NavArrow $end aria-label="Fit options"><Arrow /></NavArrow>
              </NavBar>
              <NavBar>
                <SplitButton aria-label="Display settings"><MonitorIcon /><Arrow /></SplitButton>
                <SplitButton aria-label="Grid and snaps"><GridIcon /><Arrow /></SplitButton>
                <SplitButton aria-label="Viewports"><ViewportsIcon /><Arrow /></SplitButton>
              </NavBar>
            </NavBars>
          </Footer>
        </Workspace>

        <Timeline>
          <Playback>
            {playback.map(({ name, box, d }) => (
              <IconButton key={name} aria-label={name}>
                <Icon box={box} w={14} h={16}><path d={d} fill="#4b4b4b" /></Icon>
              </IconButton>
            ))}
          </Playback>
          <FeatureButton aria-label="Sketch feature"><FeatureIcon /></FeatureButton>
          <Spacer />
          <IconButton aria-label="Settings"><SettingsIcon /></IconButton>
        </Timeline>
      </Client>
    </Window>
  );
}
